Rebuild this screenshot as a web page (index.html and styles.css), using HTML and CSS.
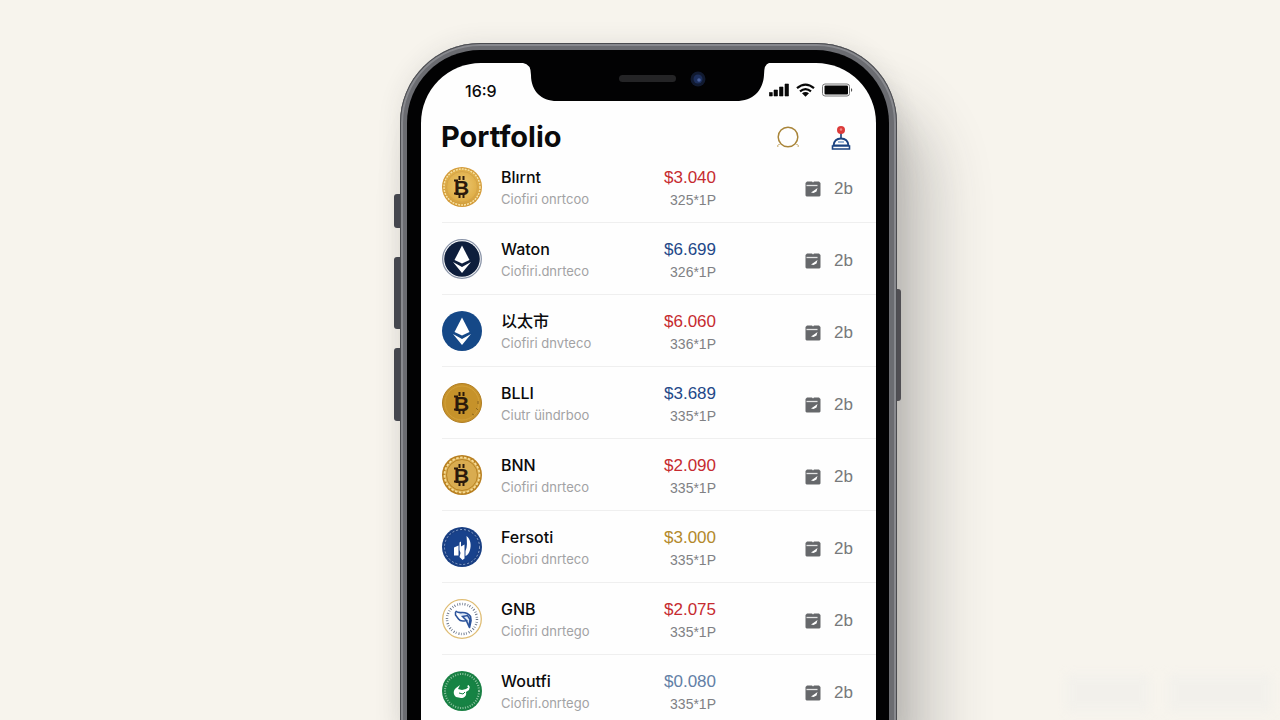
FILE: index.html
```html
<!DOCTYPE html>
<html lang="en">
<head>
<meta charset="utf-8">
<meta name="viewport" content="width=device-width, initial-scale=1">
<title>Portfolio</title>
<link rel="stylesheet" href="styles.css">
</head>
<body>
<svg class="defs" aria-hidden="true">
  <defs>
    <radialGradient id="gold" cx=".5" cy=".45" r=".6"><stop offset="0" stop-color="#ecc873"/><stop offset=".7" stop-color="#e0b04a"/><stop offset="1" stop-color="#c98f2c"/></radialGradient>
    <symbol id="btc-mark" viewBox="0 0 40 40">
      <text x="12" y="28" class="mark">B</text>
      <path d="M12 13.500h4M12 26.500h4M17.500 9v4M21.500 9v4M17.500 27v4M21.500 27v4" stroke="#2b1a0c" stroke-width="2"/>
    </symbol>
    <symbol id="eth-mark" viewBox="0 0 40 40">
      <path d="M20 6.500 27.500 21 20 24.500 12.500 21z" fill="#fff"/>
      <path d="M11 23 20 28 29 23 20 34z" fill="#fff"/>
    </symbol>
    <symbol id="wallet" viewBox="0 0 16 16">
      <path d="M1 1.500 2 .5h5l1 1 1-1h5l1.500 1.500V14.500l-1 1H1.500L.5 14.500V2z" fill="#66686b"/>
      <path d="M1.500 4.500h11" stroke="#e4e4e4" stroke-width="1.300"/>
      <path d="M6 11.500 9 9.500 12.500 7 11.500 10.500 8.500 12z" fill="#fff"/>
    </symbol>
  </defs>
</svg>
<main class="stage">
  <div class="phone">
    <span class="key key-mute"></span><span class="key key-up"></span><span class="key key-down"></span><span class="key key-power"></span>
    <div class="bezel">
      <div class="screen">
        <div class="status">
          <span class="time">16:9</span>
          <svg class="notch" viewBox="0 0 246 38" width="246" height="38" aria-hidden="true">
            <path d="M0 0Q8 1 8 12C8 28 18 38 34 38H213C230 38 240 28 241 12Q241 1 246 0z" fill="#020203"/>
            <rect x="96" y="12" width="57" height="7" rx="3.500" fill="#242426"/>
            <circle cx="175" cy="16" r="7.500" fill="#111a30"/><circle cx="175" cy="16" r="4.500" fill="#1d2f5c"/><circle cx="176" cy="17" r="1.800" fill="#4a63a0"/>
          </svg>
          <svg class="signals" viewBox="1 0 85 14" width="85" height="14" role="img" aria-label="Signal, Wi-Fi, battery">
            <path d="M1.300 9.500h3V13h-3zM6 7h3.500v6H6zM11.500 4H15v9h-3.500zM17 1h3.500V13H17z" fill="#080808" stroke="#080808" stroke-linejoin="round" stroke-width=".6"/>
            <path d="M29 5.200Q37.500-2 46 5.200M32 8.300Q37.500 3.800 43 8.300" fill="none" stroke="#080808" stroke-width="2.200"/>
            <path d="M34 10.200Q37.500 7.600 41 10.200L37.500 13.800z" fill="#080808"/>
            <rect x="54.500" y="1" width="27" height="12" rx="2.500" fill="#fff" stroke="#777"/>
            <rect x="56.500" y="2.500" width="23.500" height="9" rx="1" fill="#050505"/>
            <path d="M83 5Q85.500 7 83 9z" fill="#555"/>
          </svg>
        </div>
        <header class="head">
          <h1 class="title">Portfolio</h1>
          <div class="actions">
            <button class="action" type="button" aria-label="Search">
              <svg viewBox="0 0 26 26" width="26" height="26"><circle cx="13" cy="13" r="9.800" fill="none" stroke="#a9853a" stroke-width="1.500"/><path d="M2 22h1.500M4.500 20l-1 1M21.500 20l1 1M22.500 22H24" stroke="#b28b35"/></svg>
            </button>
            <button class="action" type="button" aria-label="Alerts">
              <svg viewBox="0 0 26 26" width="26" height="26"><path d="M13 9v6" stroke="#1b3d73" stroke-width="1.600"/><circle cx="13" cy="6" r="4" fill="#dc3b3a"/><circle cx="13" cy="5.500" r="1.200" fill="#f08a86"/><path d="M5.500 21.500C6 17 9 14.500 13 14.500s7 2.500 7.500 7z" fill="#fff" stroke="#1b4380" stroke-width="1.800"/><path d="M10 18h6" stroke="#5b85bb" stroke-width="1.200"/><path d="M4.500 22v3h17v-3z" fill="#fff" stroke="#1b4380" stroke-width="1.600"/></svg>
            </button>
          </div>
        </header>
        <ul class="assets">
          <li class="asset">
            <svg class="coin" viewBox="0 0 40 40" aria-hidden="true"><circle cx="20" cy="20" r="20" fill="#d39b39"/><circle cx="20" cy="20" r="18" fill="url(#gold)" stroke="#f8e3a4" stroke-width="1.500" stroke-dasharray="2 1"/><circle cx="20" cy="20" r="15.500" fill="none" stroke="#d5a448"/><use href="#btc-mark"/></svg>
            <div class="label"><span class="name">Blırnt</span><span class="note">Ciofiri onrtcoo</span></div>
            <div class="value"><span class="price red">$3.040</span><span class="change">325*1P</span></div>
            <div class="extra"><svg class="wallet"><use href="#wallet"/></svg><span>2b</span></div>
          </li>
          <li class="asset">
            <svg class="coin" viewBox="0 0 40 40" aria-hidden="true"><circle cx="20" cy="20" r="19.300" fill="#fff" stroke="#8a94a8" stroke-width="1.300"/><circle cx="20" cy="20" r="17.800" fill="#0e1e3c"/><use href="#eth-mark"/></svg>
            <div class="label"><span class="name">Waton</span><span class="note">Ciofiri.dnrteco</span></div>
            <div class="value"><span class="price blue">$6.699</span><span class="change">326*1P</span></div>
            <div class="extra"><svg class="wallet"><use href="#wallet"/></svg><span>2b</span></div>
          </li>
          <li class="asset">
            <svg class="coin" viewBox="0 0 40 40" aria-hidden="true"><circle cx="20" cy="20" r="20" fill="#154887"/><use href="#eth-mark"/></svg>
            <div class="label"><span class="name" lang="zh">以太市</span><span class="note">Ciofiri dnvteco</span></div>
            <div class="value"><span class="price red">$6.060</span><span class="change">336*1P</span></div>
            <div class="extra"><svg class="wallet"><use href="#wallet"/></svg><span>2b</span></div>
          </li>
          <li class="asset">
            <svg class="coin" viewBox="0 0 40 40" aria-hidden="true"><circle cx="20" cy="20" r="19.500" fill="#c6922a" stroke="#b07d22"/><circle cx="20" cy="20" r="17" fill="none" stroke="#d2a03a"/><path d="M36 18v3M34 25l2 2M30 31l2 1" stroke="#8c651d"/><use href="#btc-mark"/></svg>
            <div class="label"><span class="name">BLLI</span><span class="note">Ciutr üindrboo</span></div>
            <div class="value"><span class="price blue">$3.689</span><span class="change">335*1P</span></div>
            <div class="extra"><svg class="wallet"><use href="#wallet"/></svg><span>2b</span></div>
          </li>
          <li class="asset">
            <svg class="coin" viewBox="0 0 40 40" aria-hidden="true"><circle cx="20" cy="20" r="20" fill="#b98020"/><circle cx="20" cy="20" r="17.500" fill="#d9ac50" stroke="#f5dc98" stroke-width="1.800" stroke-dasharray="2.500 1.500"/><circle cx="20" cy="20" r="15.500" fill="none" stroke="#b98425"/><use href="#btc-mark"/></svg>
            <div class="label"><span class="name">BNN</span><span class="note">Ciofiri dnrteco</span></div>
            <div class="value"><span class="price red">$2.090</span><span class="change">335*1P</span></div>
            <div class="extra"><svg class="wallet"><use href="#wallet"/></svg><span>2b</span></div>
          </li>
          <li class="asset">
            <svg class="coin" viewBox="0 0 40 40" aria-hidden="true"><circle cx="20" cy="20" r="20" fill="#193f83"/><circle cx="20" cy="20" r="17.500" fill="none" stroke="#91a8d0" stroke-dasharray="2 2"/><circle cx="20" cy="20" r="16" fill="#18428c"/><path d="M12 20.500 16.500 18.500v10h-4.500zM17.500 15.500l1.500-1v5l3.500-2v14l-2 1.500-3-3 1-4-1-3zM24.500 9c4 3 5 9 3.500 14-1 3.500-2.500 5-4.500 6V24c2-4 1.500-9 1-15z" fill="#fff"/></svg>
            <div class="label"><span class="name">Fersoti</span><span class="note">Ciobri dnrteco</span></div>
            <div class="value"><span class="price gold">$3.000</span><span class="change">335*1P</span></div>
            <div class="extra"><svg class="wallet"><use href="#wallet"/></svg><span>2b</span></div>
          </li>
          <li class="asset">
            <svg class="coin" viewBox="0 0 40 40" aria-hidden="true"><circle cx="20" cy="20" r="19.300" fill="#fff" stroke="#dfbd75" stroke-width="1.300"/><circle cx="20" cy="20" r="15" fill="none" stroke="#69758a" stroke-width="2.500" stroke-dasharray="1 2 .7 1.500"/><path d="M13.500 12c2 2 4 1.500 7 1.500 3 0 6 1 8 4l.5 4-1.500 7-3-6.500" fill="#dfe9f7" stroke="#2a529b" stroke-width="1.700" stroke-linejoin="round"/><path d="M13.500 13v3l3 4c2 3 5 2 8 1.500l-4-4 5-1 2.500 4-1 6" fill="none" stroke="#2a529b" stroke-width="1.500"/></svg>
            <div class="label"><span class="name">GNB</span><span class="note">Ciofiri dnrtego</span></div>
            <div class="value"><span class="price red">$2.075</span><span class="change">335*1P</span></div>
            <div class="extra"><svg class="wallet"><use href="#wallet"/></svg><span>2b</span></div>
          </li>
          <li class="asset">
            <svg class="coin" viewBox="0 0 40 40" aria-hidden="true"><circle cx="20" cy="20" r="20" fill="#198044"/><circle cx="20" cy="20" r="17" fill="none" stroke="#8cc5a0" stroke-width="2" stroke-dasharray="1 1.500"/><circle cx="20" cy="20" r="14.500" fill="#168344"/><path d="M18 14l-2 4 4 1 4-1 4-3-1 4-3 2c1 4-2 6-5 6l-5-1c-3-2-3-7 0-9zM25 15l2-1v3z" fill="#fff"/><path d="M17 22l4 1 2-2" stroke="#168344" fill="none"/></svg>
            <div class="label"><span class="name">Woutfi</span><span class="note">Ciofiri.onrtego</span></div>
            <div class="value"><span class="price steel">$0.080</span><span class="change">335*1P</span></div>
            <div class="extra"><svg class="wallet"><use href="#wallet"/></svg><span>2b</span></div>
          </li>
        </ul>
      </div>
    </div>
  </div>
  <div class="haze" aria-hidden="true"><span></span><span></span></div>
</main>
</body>
</html>
```
FILE: styles.css
```css
* { box-sizing: border-box; }
body { margin: 0; background: #f7f4ed; font-family: Inter, "Noto Sans CJK SC", sans-serif; color: #0b0b0c; }
.defs { position: absolute; width: 0; height: 0; }
.stage { position: relative; display: flex; justify-content: center; height: 100vh; padding: 43px 0 0 17px; overflow: hidden; }
.phone {
  position: relative; align-self: flex-start; width: 100%; max-width: 497px; padding: 7px 8px 0 7px;
  border-radius: 80px 80px 0 0;
  background: #6b6c71;
  box-shadow: inset 0 0 0 1px #4b4c50, inset 0 0 0 3px #88898e, 36px 60px 60px rgba(50, 50, 56, .24), 12px 34px 30px rgba(50, 50, 56, .05), 0 0 24px rgba(50, 50, 56, .1);
}
.key { position: absolute; width: 6px; background: #45474e; }
.key-mute, .key-up, .key-down { left: -6px; border-radius: 3px 0 0 3px; }
.key-mute { top: 151px; height: 34px; }
.key-up { top: 214px; height: 72px; }
.key-down { top: 305px; height: 73px; }
.key-power { right: -4px; top: 246px; width: 4px; height: 112px; border-radius: 0 3px 3px 0; background: #504e53; }
.bezel { padding: 13px 13px 0 14px; border-radius: 73px 73px 0 0; background: #020203; }
.screen { border-radius: 60px 60px 0 0; background: #fefefe; }
.status { display: flex; align-items: flex-start; justify-content: space-between; height: 60px; padding: 0 22px 0 44px; }
.time { width: 58px; padding-top: 18px; font-size: 16px; line-height: 20px; font-weight: 500; }
.notch { flex: none; }
.signals { flex: none; margin-top: 20px; }
.head { display: flex; align-items: center; justify-content: space-between; height: 28px; padding: 0 22px 0 20px; }
.title { margin: 0; font-size: 29px; line-height: 28px; font-weight: 700; }
.actions { display: flex; gap: 27px; }
.action { display: block; width: 26px; height: 26px; padding: 0; border: 0; background: none; }
.action svg { display: block; }
.assets { margin: 0; padding: 0 0 0 21px; list-style: none; }
.asset { display: grid; grid-template-columns: 40px 1fr auto 137px; align-items: center; height: 72px; padding-right: 23px; border-bottom: 1px solid #efefef; }
.coin { display: block; width: 40px; height: 40px; }
.mark { font: 700 21px "Liberation Sans", sans-serif; fill: #2b1a0c; }
.label, .value { display: flex; flex-direction: column; padding-top: 2px; }
.label { padding-left: 19px; }
.value { align-items: flex-end; padding-top: 4px; font-family: "Liberation Sans", Arial, sans-serif; }
.name { font-size: 16px; line-height: 22px; font-weight: 500; }
.note { font-size: 13px; line-height: 22px; color: #a2a2a4; }
.price { font-size: 17px; line-height: 22px; }
.change { font-size: 14px; line-height: 22px; color: #808184; }
.red { color: #c62b30; }
.blue { color: #234888; }
.gold { color: #b3892b; }
.steel { color: #6380a6; }
.extra { display: flex; align-items: center; justify-content: flex-end; gap: 13px; padding-top: 4px; font-family: "Liberation Sans", Arial, sans-serif; font-size: 17px; line-height: 22px; color: #77797b; }
.wallet { width: 16px; height: 16px; }
.haze { position: absolute; right: 8px; bottom: 8px; display: flex; gap: 18px; filter: blur(5px); opacity: .6; }
.haze span { width: 84px; height: 38px; background: #f0efeb; }
.haze span + span { width: 104px; }
```
